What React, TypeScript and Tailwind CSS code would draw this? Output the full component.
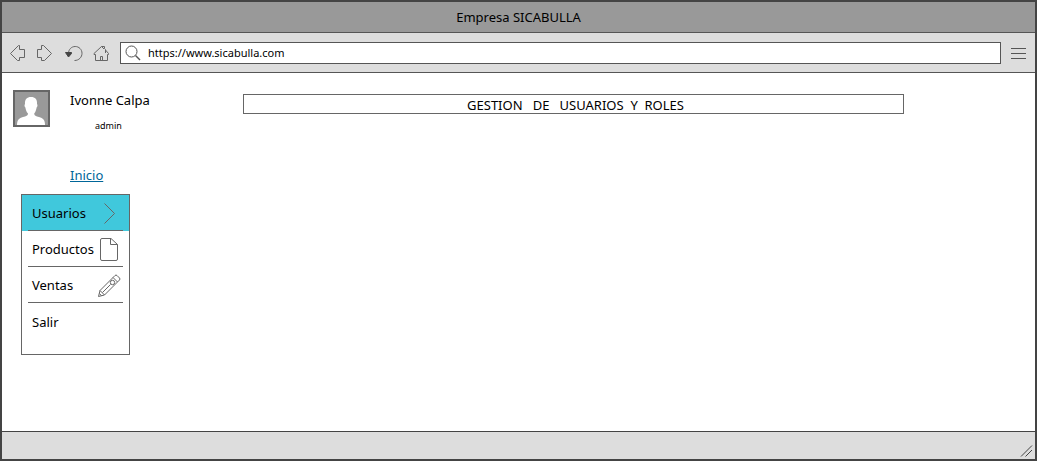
import React from "react";

const iconButton = "flex h-[18px] w-[18px] items-center justify-center";

function Icon({ children, size = 18 }: { children: React.ReactNode; size?: number }) {
  return (
    <svg
      width={size}
      height={size}
      viewBox={`0 0 ${size} ${size}`}
      fill="none"
      stroke="#666"
      strokeWidth="1"
      aria-hidden="true"
      className="block shrink-0"
    >
      {children}
    </svg>
  );
}

function TitleBar() {
  return (
    <header className="flex h-[31px] items-center justify-center border-b border-[#555] bg-[#999]">
      <h1 className="text-[13px] leading-5">Empresa SICABULLA</h1>
    </header>
  );
}

function Toolbar() {
  return (
    <div className="flex h-10 items-center border-b border-[#555] bg-[#ddd] pt-px pr-2 pl-[7px]">
      <nav aria-label="Navegador" className="flex gap-[10px]">
        <button type="button" aria-label="Atrás" className={iconButton}>
          <Icon>
            <path d="M1.5 9.5 9.5 1.5H10.5V5.5H15.5V13.5H10.5V16.5H8.5Z" />
          </Icon>
        </button>
        <button type="button" aria-label="Adelante" className={iconButton}>
          <Icon>
            <path d="M14.5 9.5 6.5 1.5H4.5V5.5H0.5V13.5H4.5V16.5H7.5Z" />
          </Icon>
        </button>
        <button type="button" aria-label="Recargar" className={iconButton}>
          <Icon>
            <path d="M3.5 9.5C3.5 5.5 6.4 2.5 10.2 2.5S17 5.5 17 9.3 14 16.5 9.5 16.5" />
            <path d="M0.5 8.5H6.5V9.5L3.5 13Z" fill="#444" stroke="#444" />
          </Icon>
        </button>
        <button type="button" aria-label="Página principal" className={iconButton}>
          <Icon>
            <path d="M1 9.5 8.5 2.5H11.5V4.5L12.5 5.5V9M8.5 2.5 11 5M12.5 6 15.5 9.5V10.5H14.5V16.5H2.5V10.5H1V9.5M7.5 16V12.5H9.5V16" />
          </Icon>
        </button>
      </nav>
      <label className="ml-[9px] flex h-[22px] flex-1 items-center border border-[#555] bg-white pl-1">
        <Icon>
          <circle cx="6.5" cy="7.5" r="5.5" stroke="#555" />
          <path d="M10.5 11.5 15 16" stroke="#555" strokeWidth="1.4" />
        </Icon>
        <input
          type="text"
          aria-label="Dirección"
          defaultValue="https://www.sicabulla.com"
          className="mb-px ml-[5px] h-4 min-w-0 flex-1 bg-transparent text-[11px] leading-4 outline-none"
        />
      </label>
      <button type="button" aria-label="Menú" className="ml-2 flex h-[18px] w-[18px] items-center justify-center">
        <Icon>
          <path d="M2 4.5H17M2 9.5H17M2 14.5H17" stroke="#555" />
        </Icon>
      </button>
    </div>
  );
}

function Avatar() {
  return (
    <svg width="37" height="37" viewBox="0 0 37 37" role="img" aria-label="Ivonne Calpa" className="block shrink-0">
      <rect x="1" y="1" width="35" height="35" fill="#999" stroke="#666" strokeWidth="2" />
      <path
        d="M4 35C4 30 6 28 10 27C13 26.3 15 25.7 15 23.5C13.3 21.8 12.7 19.5 12.4 17.5C11.3 16.8 11.3 14.5 12 14C11.6 9.5 14 7 18 7C22.2 7 24.4 9.5 24 14C24.8 14.5 24.6 16.8 23.6 17.5C23.3 19.5 22.7 21.8 21.2 23.5C21.2 25.7 23 26.3 26 27C30 28 32 30 32 35Z"
        fill="#fff"
      />
    </svg>
  );
}

function ChevronIcon() {
  return (
    <Icon size={24}>
      <path d="M6.5 1.5 16.5 11.5 6.5 21.5" />
    </Icon>
  );
}

function FileIcon() {
  return (
    <Icon size={24}>
      <path d="M13 0.5H4Q2.5 0.5 2.5 2V21Q2.5 22.5 4 22.5H18Q19.5 22.5 19.5 21V6.5ZM12.5 0.5V6.5H19.5" />
    </Icon>
  );
}

function PencilIcon() {
  return (
    <Icon size={24}>
      <path d="M0.5 22.5 2 16.5 17 1.5Q18 0.5 19 1.5L21.5 4Q22.5 5 21.5 6L6.5 21ZM2 16.5 6.5 21M1.5 19.5 3.5 21.8M15 3.5 19.5 8M4.5 18.5 12.5 10.5" />
      <circle cx="14.5" cy="8.5" r="2.2" />
    </Icon>
  );
}

const menuItems = [
  { label: "Usuarios", icon: <ChevronIcon /> },
  { label: "Productos", icon: <FileIcon /> },
  { label: "Ventas", icon: <PencilIcon /> },
  { label: "Salir", icon: null },
];

function Sidebar() {
  return (
    <aside className="w-[128px] shrink-0">
      <div className="flex gap-5 pl-[11px]">
        <Avatar />
        <div className="flex flex-col whitespace-nowrap">
          <p className="text-[13px] leading-5">Ivonne Calpa</p>
          <p className="mt-2 pl-[25px] text-[9px] leading-4">admin</p>
        </div>
      </div>
      <a href="#inicio" className="mt-[31px] ml-[68px] block w-fit text-[13px] leading-5 text-[#006699] underline">
        Inicio
      </a>
      <nav aria-label="Principal" className="mt-[9px] ml-[19px] border border-[#666] pb-[15px]">
        <ul>
          {menuItems.map((item, index) => (
            <li key={item.label} className={index === 0 ? "bg-[#40c8dc] px-1.5" : "px-1.5"}>
              <a
                href={`#${item.label.toLowerCase()}`}
                className={
                  index < menuItems.length - 1
                    ? "flex h-9 items-center justify-between border-b border-[#666] pt-[3px] pr-px pl-1 text-[13px]"
                    : "flex h-9 items-center pt-[3px] pl-1 text-[13px]"
                }
              >
                {item.label}
                {item.icon}
              </a>
            </li>
          ))}
        </ul>
      </nav>
    </aside>
  );
}

export default function App() {
  return (
    <div className="flex min-h-screen flex-col border-2 border-[#444] bg-white font-['Noto_Sans','Open_Sans',sans-serif] text-black">
      <TitleBar />
      <Toolbar />
      <div className="flex flex-1 items-start pt-[17px]">
        <Sidebar />
        <main className="mt-1 mr-[131px] ml-[113px] flex-1">
          <h2 className="flex h-5 items-center justify-center border border-[#666] pt-px pl-1 text-[13px] leading-4 whitespace-pre">
            {"GESTION   DE   USUARIOS  Y  ROLES"}
          </h2>
        </main>
      </div>
      <footer className="flex h-7 items-end justify-end border-t border-[#444] bg-[#ddd]">
        <Icon>
          <path d="M4 15.5 15 4.5M8.5 15.5 15 9" stroke="#444" />
        </Icon>
      </footer>
    </div>
  );
}
